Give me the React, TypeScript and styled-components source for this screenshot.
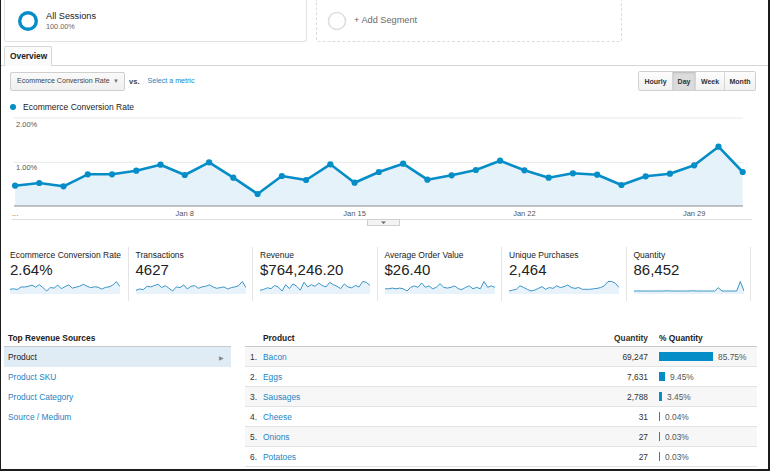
import React from "react";
import styled, { createGlobalStyle } from "styled-components";

const Global = createGlobalStyle`
  html, body { margin: 0; padding: 0; background: #fff; }
  body { font-family: "Liberation Sans", Arial, Helvetica, sans-serif; color: #333; }
`;

const BLUE = "#058dc7";
const LINK = "#2583c2";

const Frame = styled.div`
  width: 770px;
  height: 471px;
  box-sizing: border-box;
  border-left: 1px solid #1c1c1c;
  border-right: 2px solid #1c1c1c;
  border-bottom: 2px solid #1c1c1c;
  background: #fff;
  overflow: hidden;
`;

const SegmentsBar = styled.div`
  display: flex;
  gap: 9px;
  padding-left: 3px;
  height: 42px;
`;

const SegmentCard = styled.div<{ $dashed?: boolean; $w: number }>`
  width: ${(p) => p.$w}px;
  box-sizing: border-box;
  height: 42px;
  border: 1px ${(p) => (p.$dashed ? "dashed" : "solid")} ${(p) => (p.$dashed ? "#dcdcdc" : "#e2e2e2")};
  border-top: none;
  border-radius: 0 0 3px 3px;
  display: flex;
  align-items: center;
  gap: 7px;
  padding-left: ${(p) => (p.$dashed ? 10 : 12)}px;
`;

const SegText = styled.div`
  display: flex;
  flex-direction: column;
`;

const SegTitle = styled.span<{ $muted?: boolean }>`
  font-size: 9.2px;
  line-height: 11px;
  color: ${(p) => (p.$muted ? "#6a6a6a" : "#222")};
`;

const SegSub = styled.span`
  font-size: 7.3px;
  line-height: 9px;
  color: #666;
`;

const TabBar = styled.div`
  margin-top: 4px;
  height: 20px;
  box-sizing: border-box;
  border-bottom: 1px solid #d6d6d6;
  padding-left: 3px;
  display: flex;
  align-items: flex-end;
`;

const Tab = styled.div`
  height: 20px;
  box-sizing: border-box;
  width: 48px;
  border: 1px solid #d6d6d6;
  border-bottom: none;
  border-radius: 2px 2px 0 0;
  background: #fbfbfb;
  margin-bottom: -1px;
  padding-left: 5px;
  font-size: 8.4px;
  font-weight: bold;
  line-height: 19px;
  color: #222;
`;

const Controls = styled.div`
  margin-top: 5px;
  height: 20px;
  display: flex;
  justify-content: space-between;
  align-items: center;
  padding: 0 12px 0 9px;
`;

const Left = styled.div`
  display: flex;
  align-items: center;
`;

const Dropdown = styled.div`
  width: 115px;
  height: 19px;
  box-sizing: border-box;
  border: 1px solid #cfcfcf;
  border-radius: 2px;
  background: linear-gradient(#fafafa, #efefef);
  display: flex;
  align-items: center;
  justify-content: space-between;
  padding: 0 5px 0 6px;
  font-size: 7.1px;
  color: #444;
`;

const Caret = styled.span`
  font-size: 6px;
  color: #777;
`;

const Vs = styled.span`
  margin-left: 4px;
  font-size: 7.6px;
  font-weight: bold;
  color: #444;
`;

const MetricLink = styled.span`
  margin-left: 8px;
  font-size: 7.1px;
  color: ${LINK};
`;

const BtnGroup = styled.div`
  display: flex;
  height: 20px;
  box-sizing: border-box;
  border: 1px solid #d0d0d0;
  border-radius: 2px;
  overflow: hidden;
`;

const Btn = styled.div<{ $w: number; $active?: boolean }>`
  width: ${(p) => p.$w}px;
  box-sizing: border-box;
  display: flex;
  align-items: center;
  justify-content: center;
  font-size: 7px;
  font-weight: bold;
  color: #333;
  background: ${(p) => (p.$active ? "#dcdcdc" : "linear-gradient(#fdfdfd, #f1f1f1)")};
  box-shadow: ${(p) => (p.$active ? "inset 0 1px 2px rgba(0,0,0,0.15)" : "none")};
  & + & { border-left: 1px solid #d6d6d6; }
`;

const Legend = styled.div`
  margin-top: 10px;
  height: 11px;
  display: flex;
  align-items: center;
  padding-left: 9px;
  gap: 7px;
  font-size: 8.5px;
  color: #222;
`;

const Dot = styled.span`
  width: 6px;
  height: 6px;
  border-radius: 50%;
  background: ${BLUE};
`;

const ChartBox = styled.div`
  margin-left: 11px;
  height: 114px;
`;

const AxisText = styled.text`
  font-size: 7.5px;
  fill: #555;
  font-family: "Liberation Sans", Arial, sans-serif;
`;

const Scorecards = styled.div`
  margin-top: 21px;
  height: 54px;
  display: flex;
  padding-left: 3px;
`;

const Card = styled.div`
  width: 124.5px;
  box-sizing: border-box;
  border-right: 1px solid #e4e4e4;
  padding: 2px 0 0 7px;
  &:first-child { padding-left: 6px; }
  display: flex;
  flex-direction: column;
`;

const CardTitle = styled.div`
  font-size: 8.5px;
  line-height: 12px;
  color: #222;
  white-space: nowrap;
`;

const CardValue = styled.div`
  font-size: 15px;
  line-height: 18px;
  color: #222;
`;

const Tables = styled.div`
  margin-top: 30px;
  display: flex;
  padding-left: 3px;
  gap: 14px;
`;

const SourcePanel = styled.div`
  width: 227px;
`;

const HeadRow = styled.div`
  height: 16px;
  box-sizing: border-box;
  border-bottom: 1px solid #c9c9c9;
  font-size: 8.4px;
  font-weight: bold;
  color: #222;
  line-height: 15px;
`;

const SourceHead = styled(HeadRow)`
  padding-left: 4px;
`;

const SourceRow = styled.div<{ $active?: boolean }>`
  height: 20px;
  display: flex;
  align-items: center;
  justify-content: space-between;
  padding: 0 7px 0 4px;
  font-size: 8.4px;
  background: ${(p) => (p.$active ? "#dfebf5" : "transparent")};
  color: ${(p) => (p.$active ? "#222" : LINK)};
`;

const Arrow = styled.span`
  font-size: 6px;
  color: #888;
`;

const ProductTable = styled.div`
  width: 512px;
`;

const grid = `
  display: grid;
  grid-template-columns: 18px 297px 88px 11px 98px;
  align-items: center;
`;

const PHead = styled(HeadRow)`
  ${grid}
`;

const PRow = styled.div<{ $odd: boolean }>`
  ${grid}
  height: 20px;
  box-sizing: border-box;
  border-bottom: 1px solid #e2e2e2;
  background: ${(p) => (p.$odd ? "#f7f7f7" : "#fff")};
  font-size: 8.4px;
`;

const Num = styled.span`
  padding-left: 5px;
  color: #333;
`;

const Name = styled.span`
  color: ${LINK};
`;

const Qty = styled.span`
  text-align: right;
  color: #333;
`;

const PctCell = styled.div`
  display: flex;
  align-items: center;
  gap: 5px;
  color: #555;
`;

const Bar = styled.span`
  height: 9px;
  background: ${BLUE};
`;

const chartYs = [
  185.7, 183, 186.3, 174.3, 174.3, 170.7, 164.7, 175, 162.3, 177.7, 194, 176, 180, 164.3, 182.7, 172,
  163.7, 179.7, 175.3, 170, 160.7, 170.3, 177.7, 173.3, 174.7, 185, 176.3, 173.7, 165.3, 146.7, 172,
];

const Chart: React.FC = () => {
  const pts = chartYs.map((y, i) => [3 + i * 24.257, y - 112] as const);
  const line = pts.map((p, i) => `${i ? "L" : "M"}${p[0].toFixed(1)},${p[1].toFixed(1)}`).join(" ");
  const area = `${line} L${pts[pts.length - 1][0].toFixed(1)},94 L${pts[0][0].toFixed(1)},94 Z`;
  const labels: [string, number][] = [
    ["Jan 8", 7],
    ["Jan 15", 14],
    ["Jan 22", 21],
    ["Jan 29", 28],
  ];
  return (
    <svg width="742" height="114" viewBox="0 0 742 114">
      <line x1="2" y1="6" x2="731" y2="6" stroke="#e9e9e9" />
      <line x1="2" y1="50.3" x2="731" y2="50.3" stroke="#e9e9e9" />
      <path d={area} fill="#e6f2fa" />
      <line x1="2" y1="94" x2="731" y2="94" stroke="#8a8a8a" strokeWidth="1.2" />
      <AxisText x="4" y="15">2.00%</AxisText>
      <AxisText x="4" y="58">1.00%</AxisText>
      <path d={line} fill="none" stroke={BLUE} strokeWidth="2.6" strokeLinejoin="round" />
      {pts.map((p, i) => (
        <circle key={i} cx={p[0]} cy={p[1]} r="3.1" fill={BLUE} />
      ))}
      <AxisText x="0" y="104">...</AxisText>
      {labels.map(([t, i]) => (
        <AxisText key={t} x={3 + i * 24.257} y="104" textAnchor="middle">
          {t}
        </AxisText>
      ))}
      <line x1="0" y1="107.5" x2="740" y2="107.5" stroke="#dedede" />
      <rect x="355.5" y="107.5" width="32" height="6" fill="#f3f3f3" stroke="#cfcfcf" />
      <path d="M369,109.5 L374,109.5 L371.5,112 Z" fill="#666" />
    </svg>
  );
};

const Spark: React.FC<{ values: number[] }> = ({ values }) => {
  const w = 110;
  const h = 14;
  const min = Math.min(...values);
  const max = Math.max(...values);
  const pts = values.map((v, i) => [(i * w) / (values.length - 1), 1.5 + (1 - (v - min) / (max - min || 1)) * 9.5]);
  const line = pts.map((p, i) => `${i ? "L" : "M"}${p[0].toFixed(1)},${p[1].toFixed(1)}`).join(" ");
  const area = `${line} L${w},${h} L0,${h} Z`;
  return (
    <svg width={w} height={h} viewBox={`0 0 ${w} ${h}`} style={{ display: "block", marginTop: 1 }}>
      <path d={area} fill="#e8f2fa" />
      <path d={line} fill="none" stroke="#3d96c9" strokeWidth="1" strokeLinejoin="round" />
    </svg>
  );
};

const cards = [
  { t: "Ecommerce Conversion Rate", v: "2.64%", d: chartYs.map((y) => 206 - y) },
  { t: "Transactions", v: "4627", d: [20, 22, 21, 26, 25, 27, 29, 24, 27, 23, 19, 25, 24, 28, 22, 26, 27, 23, 25, 26, 28, 25, 23, 24, 25, 22, 24, 25, 27, 33, 24] },
  { t: "Revenue", v: "$764,246.20", d: [20, 21, 23, 22, 26, 24, 19, 27, 22, 28, 25, 20, 30, 24, 27, 25, 29, 26, 24, 30, 27, 25, 22, 28, 24, 23, 26, 24, 31, 30, 26] },
  { t: "Average Order Value", v: "$26.40", d: [24, 24, 24.5, 24, 24.5, 24, 22.5, 25, 26, 25, 28, 25, 26, 24, 25, 27.5, 25, 24.5, 25, 26, 24, 23.5, 25, 26, 24, 25, 24, 29, 25, 26, 25] },
  { t: "Unique Purchases", v: "2,464", d: [20, 21, 22, 26, 24, 22, 20, 21, 23, 25, 22, 24, 23, 26, 24, 25, 27, 24, 23, 24, 22, 22, 22, 22.5, 23, 24, 26, 31, 31, 29, 24] },
  { t: "Quantity", v: "86,452", d: [2, 2, 2, 2, 2, 2, 2, 2, 2, 2.4, 2, 2, 2, 2, 2, 2, 2.4, 2, 2, 2, 2, 2, 2, 9, 2, 2, 2, 2, 2, 22, 2] },
];

const sources = ["Product", "Product SKU", "Product Category", "Source / Medium"];

const products = [
  { n: "Bacon", q: "69,247", p: "85.75%", w: 54 },
  { n: "Eggs", q: "7,631", p: "9.45%", w: 6 },
  { n: "Sausages", q: "2,788", p: "3.45%", w: 3 },
  { n: "Cheese", q: "31", p: "0.04%", w: 1 },
  { n: "Onions", q: "27", p: "0.03%", w: 1 },
  { n: "Potatoes", q: "27", p: "0.03%", w: 1 },
];

export default function App() {
  return (
    <>
      <Global />
      <Frame>
        <SegmentsBar>
          <SegmentCard $w={303}>
            <svg width="22" height="22" viewBox="0 0 22 22">
              <circle cx="11" cy="11" r="8.3" fill="none" stroke={BLUE} strokeWidth="3.4" />
            </svg>
            <SegText>
              <SegTitle>All Sessions</SegTitle>
              <SegSub>100.00%</SegSub>
            </SegText>
          </SegmentCard>
          <SegmentCard $w={306} $dashed>
            <svg width="20" height="20" viewBox="0 0 20 20">
              <circle cx="10" cy="10" r="8.5" fill="none" stroke="#dedede" strokeWidth="1.6" />
            </svg>
            <SegTitle $muted>+ Add Segment</SegTitle>
          </SegmentCard>
        </SegmentsBar>

        <TabBar>
          <Tab>Overview</Tab>
        </TabBar>

        <Controls>
          <Left>
            <Dropdown>
              <span>Ecommerce Conversion Rate</span>
              <Caret>▼</Caret>
            </Dropdown>
            <Vs>vs.</Vs>
            <MetricLink>Select a metric</MetricLink>
          </Left>
          <BtnGroup>
            <Btn $w={33}>Hourly</Btn>
            <Btn $w={23} $active>Day</Btn>
            <Btn $w={29}>Week</Btn>
            <Btn $w={31}>Month</Btn>
          </BtnGroup>
        </Controls>

        <Legend>
          <Dot />
          <span>Ecommerce Conversion Rate</span>
        </Legend>

        <ChartBox>
          <Chart />
        </ChartBox>

        <Scorecards>
          {cards.map((c) => (
            <Card key={c.t}>
              <CardTitle>{c.t}</CardTitle>
              <CardValue>{c.v}</CardValue>
              <Spark values={c.d} />
            </Card>
          ))}
        </Scorecards>

        <Tables>
          <SourcePanel>
            <SourceHead>Top Revenue Sources</SourceHead>
            {sources.map((s, i) => (
              <SourceRow key={s} $active={i === 0}>
                <span>{s}</span>
                {i === 0 && <Arrow>▶</Arrow>}
              </SourceRow>
            ))}
          </SourcePanel>
          <ProductTable>
            <PHead>
              <span />
              <span>Product</span>
              <Qty>Quantity</Qty>
              <span />
              <span>% Quantity</span>
            </PHead>
            {products.map((p, i) => (
              <PRow key={p.n} $odd={i % 2 === 0}>
                <Num>{i + 1}.</Num>
                <Name>{p.n}</Name>
                <Qty>{p.q}</Qty>
                <span />
                <PctCell>
                  <Bar style={{ width: p.w }} />
                  <span>{p.p}</span>
                </PctCell>
              </PRow>
            ))}
          </ProductTable>
        </Tables>
      </Frame>
    </>
  );
}
